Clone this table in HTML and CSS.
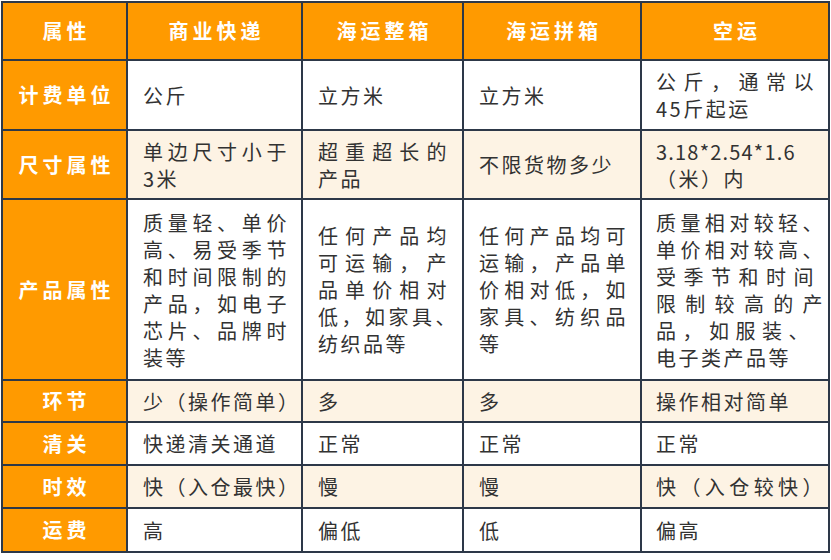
FILE: index.html
```html
<!DOCTYPE html>
<html lang="zh-CN">
<head>
<meta charset="utf-8">
<title>物流方式对比</title>
<link rel="stylesheet" href="styles.css">
</head>
<body>
<table class="cmp">
  <colgroup>
    <col class="c1"><col class="c2"><col class="c3"><col class="c4"><col class="c5">
  </colgroup>
  <tr class="r-head">
    <th>属性</th><th>商业快递</th><th>海运整箱</th><th>海运拼箱</th><th>空运</th>
  </tr>
  <tr class="r-unit">
    <th>计费单位</th>
    <td>公斤</td>
    <td>立方米</td>
    <td>立方米</td>
    <td class="p5"><span class="ln j short">公斤，通常以</span><span class="ln">45斤起运</span></td>
  </tr>
  <tr class="r-size alt">
    <th>尺寸属性</th>
    <td><span class="ln j">单边尺寸小于</span><span class="ln">3米</span></td>
    <td class="p3"><span class="ln j">超重超长的</span><span class="ln">产品</span></td>
    <td>不限货物多少</td>
    <td class="p5"><span class="ln num">3.18*2.54*1.6</span><span class="ln">（米）内</span></td>
  </tr>
  <tr class="r-prod">
    <th>产品属性</th>
    <td>
      <span class="ln j">质量轻、单价</span>
      <span class="ln j">高、易受季节</span>
      <span class="ln j">和时间限制的</span>
      <span class="ln j">产品，如电子</span>
      <span class="ln j">芯片、品牌时</span>
      <span class="ln">装等</span>
    </td>
    <td class="p3">
      <span class="ln j">任何产品均</span>
      <span class="ln j">可运输，产</span>
      <span class="ln j">品单价相对</span>
      <span class="ln j long">低，如家具、</span>
      <span class="ln">纺织品等</span>
    </td>
    <td>
      <span class="ln j">任何产品均可</span>
      <span class="ln j">运输，产品单</span>
      <span class="ln j">价相对低，如</span>
      <span class="ln j">家具、纺织品</span>
      <span class="ln">等</span>
    </td>
    <td class="p5">
      <span class="ln j">质量相对较轻、</span>
      <span class="ln j">单价相对较高、</span>
      <span class="ln j short">受季节和时间</span>
      <span class="ln j">限制较高的产</span>
      <span class="ln j shorter">品，如服装、</span>
      <span class="ln">电子类产品等</span>
    </td>
  </tr>
  <tr class="r-step alt">
    <th>环节</th>
    <td class="tight">少（操作简单）</td>
    <td>多</td>
    <td>多</td>
    <td class="p5">操作相对简单</td>
  </tr>
  <tr class="r-clear">
    <th>清关</th>
    <td>快递清关通道</td>
    <td>正常</td>
    <td>正常</td>
    <td class="p5">正常</td>
  </tr>
  <tr class="r-time alt">
    <th>时效</th>
    <td class="tight">快（入仓最快）</td>
    <td>慢</td>
    <td>慢</td>
    <td class="p5"><span class="ln j">快（入仓较快）</span></td>
  </tr>
  <tr class="r-fee">
    <th>运费</th>
    <td>高</td>
    <td>偏低</td>
    <td>低</td>
    <td class="p5">偏高</td>
  </tr>
</table>
</body>
</html>
```

FILE: styles.css
```css
html, body {
  margin: 0;
  padding: 0;
  background: #ffffff;
}

body {
  padding: 1px 0 0 1px;
  font-family: "Noto Sans CJK SC", "Noto Sans", sans-serif;
}

.cmp {
  border-collapse: collapse;
  table-layout: fixed;
  width: 829px;
}

.c1 { width: 125px; }
.c2 { width: 175px; }
.c3 { width: 161px; }
.c4 { width: 178px; }
.c5 { width: 188px; }

.cmp th,
.cmp td {
  border: 2px solid #2d3848;
  vertical-align: middle;
  padding: 0;
}

.cmp th {
  background: #ff9a00;
  color: #ffffff;
  font-weight: 700;
  font-size: 20px;
  letter-spacing: 4px;
  text-indent: 4px;
  text-align: center;
  line-height: 26px;
}

.cmp td {
  color: #323232;
  font-size: 20px;
  letter-spacing: 2.5px;
  line-height: 27px;
  text-align: left;
  padding: 0 12px 0 15px;
  background: #ffffff;
}

.cmp td.p3 { padding-right: 13px; }
.cmp td.p5 { padding-left: 14px; padding-right: 3px; }
.cmp td.tight { padding-right: 0; white-space: nowrap; }

.cmp .alt td { background: #fdf3e4; }

.ln { display: block; }
.ln.j { text-align: justify; text-align-last: justify; }
.ln.long { margin-right: -9px; }
.ln.short { margin-right: 9px; }
.ln.shorter { margin-right: 14px; }
.ln.num { letter-spacing: 1.2px; }

.r-head { height: 58px; }
.r-unit { height: 70px; }
.r-size { height: 69px; }
.r-prod { height: 181px; }
.r-step { height: 42px; }
.r-clear { height: 43px; }
.r-time { height: 43px; }
.r-fee { height: 44px; }
```
